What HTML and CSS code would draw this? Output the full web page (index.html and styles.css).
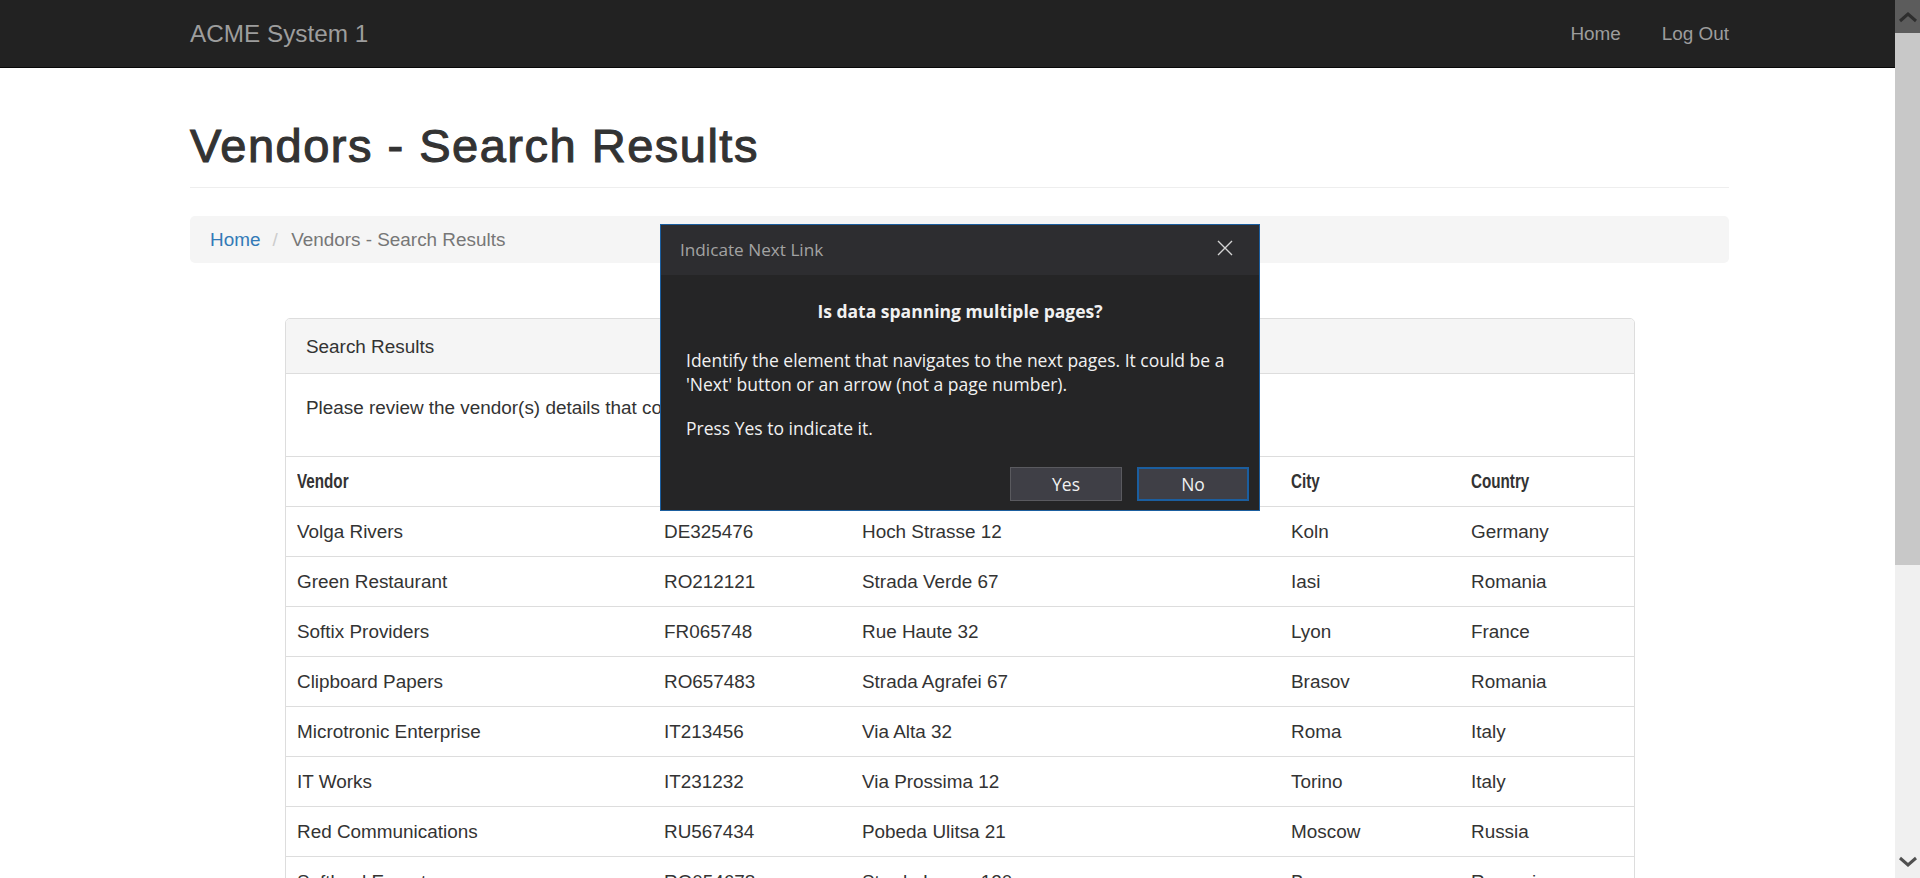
FILE: index.html
```html
<!DOCTYPE html>
<html lang="en">
<head>
<meta charset="utf-8">
<title>Vendors - Search Results</title>
<link rel="stylesheet" href="styles.css">
</head>
<body>
<div class="viewport">
  <div class="page">
    <nav class="navbar">
      <div class="container nav-inner">
        <a class="brand" href="#">ACME System 1</a>
        <ul class="nav">
          <li><a href="#">Home</a></li>
          <li><a href="#">Log Out</a></li>
        </ul>
      </div>
    </nav>

    <div class="container">
      <div class="page-header">
        <h1>Vendors - Search Results</h1>
      </div>

      <ol class="breadcrumb">
        <li><a href="#">Home</a></li>
        <li class="sep">/</li>
        <li class="active">Vendors - Search Results</li>
      </ol>

      <div class="panel">
        <div class="panel-heading">Search Results</div>
        <div class="panel-body">
          <p>Please review the vendor(s) details that correspond to your search criteria.</p>
        </div>
        <table class="table">
          <colgroup>
            <col class="c1"><col class="c2"><col class="c3"><col class="c4"><col class="c5">
          </colgroup>
          <thead>
            <tr><th><span>Vendor</span></th><th><span>Tax ID</span></th><th><span>Address</span></th><th><span>City</span></th><th><span>Country</span></th></tr>
          </thead>
          <tbody>
            <tr><td>Volga Rivers</td><td>DE325476</td><td>Hoch Strasse 12</td><td>Koln</td><td>Germany</td></tr>
            <tr><td>Green Restaurant</td><td>RO212121</td><td>Strada Verde 67</td><td>Iasi</td><td>Romania</td></tr>
            <tr><td>Softix Providers</td><td>FR065748</td><td>Rue Haute 32</td><td>Lyon</td><td>France</td></tr>
            <tr><td>Clipboard Papers</td><td>RO657483</td><td>Strada Agrafei 67</td><td>Brasov</td><td>Romania</td></tr>
            <tr><td>Microtronic Enterprise</td><td>IT213456</td><td>Via Alta 32</td><td>Roma</td><td>Italy</td></tr>
            <tr><td>IT Works</td><td>IT231232</td><td>Via Prossima 12</td><td>Torino</td><td>Italy</td></tr>
            <tr><td>Red Communications</td><td>RU567434</td><td>Pobeda Ulitsa 21</td><td>Moscow</td><td>Russia</td></tr>
            <tr><td>Softload Export</td><td>RO054678</td><td>Strada Lunga 120</td><td>Brasov</td><td>Romania</td></tr>
            <tr><td>Blue Systems</td><td>RO111222</td><td>Strada Mare 10</td><td>Cluj</td><td>Romania</td></tr>
          </tbody>
        </table>
      </div>
    </div>

    <div class="dialog">
      <div class="dialog-title">
        <span>Indicate Next Link</span>
        <svg class="close" width="16" height="16" viewBox="0 0 16 16"><path d="M1 1 L15 15 M15 1 L1 15" stroke="#d4d4d4" stroke-width="1.4" fill="none"/></svg>
      </div>
      <div class="dialog-body">
        <p class="question">Is data spanning multiple pages?</p>
        <p class="msg">Identify the element that navigates to the next pages. It could be a 'Next' button or an arrow (not a page number).</p>
        <p class="msg msg2">Press Yes to indicate it.</p>
        <div class="buttons">
          <button class="btn">Yes</button>
          <button class="btn btn-primary">No</button>
        </div>
      </div>
    </div>
  </div>

  <div class="scrollbar">
    <div class="sb-up"><svg width="20" height="12" viewBox="0 0 20 12"><polyline points="2,10 10,3 18,10" stroke="#2e2e2e" stroke-width="3" fill="none"/></svg></div>
    <div class="sb-thumb"></div>
    <div class="sb-track"></div>
    <div class="sb-down"><svg width="20" height="12" viewBox="0 0 20 12"><polyline points="2,2 10,9 18,2" stroke="#505050" stroke-width="3" fill="none"/></svg></div>
  </div>
</div>
</body>
</html>
```

FILE: styles.css
```css
html, body {
  margin: 0;
  padding: 0;
  height: 878px;
  overflow: hidden;
}

body {
  font-family: "Liberation Sans", Arial, sans-serif;
  font-size: 18.9px;
  line-height: 27px;
  color: #333;
  background: #fff;
}

.viewport {
  display: flex;
  height: 878px;
}

.page {
  position: relative;
  flex: 1;
  height: 878px;
  overflow: hidden;
}

a { text-decoration: none; }

.container {
  width: 1539px;
  margin-left: 190px;
}

/* navbar */
.navbar {
  background: #222;
  border-bottom: 1px solid #080808;
  height: 67px;
}

.nav-inner {
  display: flex;
  justify-content: space-between;
  align-items: flex-start;
}

.brand {
  color: #9d9d9d;
  font-size: 24.3px;
  line-height: 27px;
  padding: 20px 0;
}

.nav {
  list-style: none;
  margin: 0;
  padding: 0;
  display: flex;
}

.nav a {
  display: block;
  color: #9d9d9d;
  font-size: 18.9px;
  line-height: 27px;
  padding: 20px 20.5px;
}

.nav li:last-child a { padding-right: 0; }

/* header */
.page-header {
  padding-bottom: 14px;
  border-bottom: 1px solid #eee;
  margin-bottom: 28px;
}

h1 {
  margin: 51px 0 0;
  font-size: 47px;
  line-height: 54px;
  font-weight: normal;
  letter-spacing: 1.5px;
  -webkit-text-stroke: 1.1px #333;
  color: #333;
}

/* breadcrumb */
.breadcrumb {
  list-style: none;
  margin: 0 0 55px;
  padding: 10px 20px;
  background: #f5f5f5;
  border-radius: 5px;
  display: flex;
}

.breadcrumb a { color: #337ab7; }

.breadcrumb .sep {
  color: #ccc;
  margin: 0 13.5px 0 12px;
}

.breadcrumb .active { color: #777; }

/* panel */
.panel {
  margin: 0 94px 0 95px;
  border: 1px solid #ddd;
  border-radius: 5px;
  background: #fff;
}

.panel-heading {
  background: #f5f5f5;
  border-bottom: 1px solid #ddd;
  padding: 14px 20px 13px;
  border-radius: 4px 4px 0 0;
}

.panel-body {
  padding: 20px 20px 21px;
}

.panel-body p {
  margin: 0 0 14px;
}

.table {
  width: 100%;
  border-collapse: collapse;
  table-layout: fixed;
}

.c1 { width: 367px; }
.c2 { width: 198px; }
.c3 { width: 429px; }
.c4 { width: 180px; }

.table th,
.table td {
  text-align: left;
  padding: 11px 11px;
  border-top: 1px solid #ddd;
  line-height: 27px;
  height: 27px;
  white-space: nowrap;
}

.table th {
  font-weight: bold;
  color: #333;
  font-size: 19.5px;
}

.table th span {
  display: inline-block;
  transform: scaleX(0.78);
  transform-origin: left center;
}

/* dialog */
.dialog {
  position: absolute;
  left: 660px;
  top: 224px;
  width: 600px;
  height: 287px;
  box-sizing: border-box;
  border: 1px solid #1b5e9f;
  background: #252526;
  font-family: "Open Sans", "Noto Sans", sans-serif;
  font-size: 17.5px;
  color: #f1f1f1;
}

.dialog-title {
  height: 50px;
  background: #2d2d30;
  display: flex;
  align-items: center;
  justify-content: space-between;
  padding: 0 26px 0 19px;
  color: #a3a3a3;
  font-size: 17.2px;
  line-height: 24px;
}

.close { display: block; margin-top: -4px; }

.dialog-body {
  padding: 24px 10px 0 25px;
}

.dialog-body p {
  margin: 0;
  line-height: 24px;
}

.question {
  font-weight: bold;
  text-align: center;
  margin-right: 15px !important;
}

.msg { margin-top: 25px !important; padding-right: 8px; }
.msg2 { margin-top: 20px !important; }

.buttons {
  display: flex;
  justify-content: flex-end;
  gap: 15px;
  margin-top: 27px;
}

.btn {
  width: 112px;
  height: 34px;
  box-sizing: border-box;
  background: #3f3f46;
  border: 1px solid #5a5a5f;
  color: #f1f1f1;
  font-family: "Open Sans", "Noto Sans", sans-serif;
  font-size: 17.5px;
  padding: 0;
}

.btn-primary {
  border: 2px solid #1b5e9f;
}

/* scrollbar */
.scrollbar {
  width: 25px;
  height: 878px;
  display: flex;
  flex-direction: column;
  background: #f0f0f0;
}

.sb-up {
  height: 33px;
  background: #5c5c5c;
  display: flex;
  align-items: center;
  justify-content: center;
}

.sb-thumb {
  height: 532px;
  background: #c8c8c8;
}

.sb-track { flex: 1; }

.sb-down {
  height: 33px;
  display: flex;
  align-items: center;
  justify-content: center;
}
```
